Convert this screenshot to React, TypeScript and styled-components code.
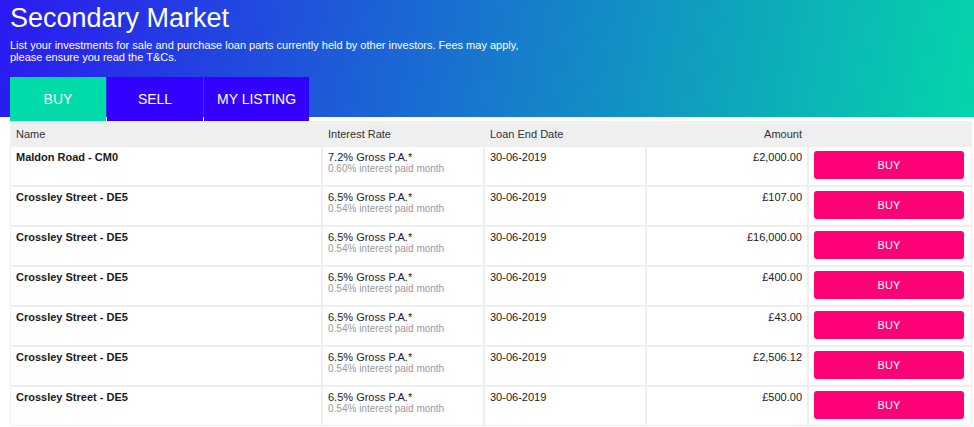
import React from "react";
import styled, { createGlobalStyle } from "styled-components";

const GlobalStyle = createGlobalStyle`
  html, body {
    margin: 0;
    padding: 0;
    background: #ffffff;
    font-family: "Liberation Sans", Arial, Helvetica, sans-serif;
  }
  * { box-sizing: border-box; }
`;

const Page = styled.div`
  width: 974px;
  overflow: hidden;
`;

const Hero = styled.header`
  background: linear-gradient(100deg, #2b1af1 0%, #04d5aa 100%);
  padding: 2px 10px 0;
  height: 117px;
  color: #ffffff;
`;

const Title = styled.h1`
  margin: 0;
  font-size: 27px;
  line-height: 32px;
  font-weight: 400;
`;

const Intro = styled.p`
  margin: 5px 0 0;
  font-size: 11px;
  line-height: 12px;
  width: 520px;
`;

const Tabs = styled.nav`
  display: flex;
  gap: 1px;
  margin-top: 14px;
  height: 44px;
`;

const Tab = styled.button<{ $active?: boolean }>`
  min-width: 96px;
  height: 44px;
  padding: 0 13px;
  border: none;
  margin: 0;
  background: ${(p) => (p.$active ? "#00dbaa" : "#3300ff")};
  color: #ffffff;
  font-family: inherit;
  font-size: 14px;
  font-weight: 400;
  cursor: pointer;
`;

const Table = styled.table`
  width: 962px;
  margin: 4px 0 0 10px;
  border-collapse: separate;
  border-spacing: 0;
  table-layout: fixed;
  font-size: 11px;
  color: #1a1a1a;
`;

const HeadCell = styled.th<{ $align?: "left" | "right" }>`
  background: #efefef;
  border: 1px solid #efefef;
  height: 25px;
  padding: 0 5px;
  font-weight: 400;
  text-align: ${(p) => p.$align ?? "left"};
  color: #333333;
  font-size: 11px;
`;

const Cell = styled.td<{ $align?: "left" | "right" }>`
  background: #ffffff;
  border: 1px solid #eeeeee;
  height: 40px;
  padding: 4px 5px 0;
  vertical-align: top;
  text-align: ${(p) => p.$align ?? "left"};
  line-height: 12px;
`;

const ButtonCell = styled.td`
  background: #ffffff;
  border: 1px solid #eeeeee;
  height: 40px;
  padding: 4px 5px 0 5px;
  vertical-align: top;
`;

const Name = styled.span`
  font-weight: 700;
`;

const Rate = styled.div`
  font-size: 11px;
  line-height: 12px;
`;

const RateNote = styled.div`
  font-size: 10px;
  line-height: 11px;
  color: #9a9a9a;
`;

const BuyButton = styled.button`
  display: block;
  width: 150px;
  height: 28px;
  border: none;
  border-radius: 3px;
  background: #ff0077;
  color: #ffffff;
  font-family: inherit;
  font-size: 11px;
  letter-spacing: 0.2px;
  cursor: pointer;
`;

type Listing = {
  name: string;
  rate: string;
  monthly: string;
  end: string;
  amount: string;
};

const listings: Listing[] = [
  { name: "Maldon Road - CM0", rate: "7.2% Gross P.A.*", monthly: "0.60% interest paid month", end: "30-06-2019", amount: "£2,000.00" },
  { name: "Crossley Street - DE5", rate: "6.5% Gross P.A.*", monthly: "0.54% interest paid month", end: "30-06-2019", amount: "£107.00" },
  { name: "Crossley Street - DE5", rate: "6.5% Gross P.A.*", monthly: "0.54% interest paid month", end: "30-06-2019", amount: "£16,000.00" },
  { name: "Crossley Street - DE5", rate: "6.5% Gross P.A.*", monthly: "0.54% interest paid month", end: "30-06-2019", amount: "£400.00" },
  { name: "Crossley Street - DE5", rate: "6.5% Gross P.A.*", monthly: "0.54% interest paid month", end: "30-06-2019", amount: "£43.00" },
  { name: "Crossley Street - DE5", rate: "6.5% Gross P.A.*", monthly: "0.54% interest paid month", end: "30-06-2019", amount: "£2,506.12" },
  { name: "Crossley Street - DE5", rate: "6.5% Gross P.A.*", monthly: "0.54% interest paid month", end: "30-06-2019", amount: "£500.00" },
];

export default function App() {
  return (
    <Page>
      <GlobalStyle />
      <Hero>
        <Title>Secondary Market</Title>
        <Intro>
          List your investments for sale and purchase loan parts currently held by other investors. Fees may apply,
          please ensure you read the T&amp;Cs.
        </Intro>
        <Tabs>
          <Tab $active>BUY</Tab>
          <Tab>SELL</Tab>
          <Tab>MY LISTING</Tab>
        </Tabs>
      </Hero>
      <Table>
        <colgroup>
          <col style={{ width: 312 }} />
          <col style={{ width: 162 }} />
          <col style={{ width: 162 }} />
          <col style={{ width: 162 }} />
          <col style={{ width: 164 }} />
        </colgroup>
        <thead>
          <tr>
            <HeadCell>Name</HeadCell>
            <HeadCell>Interest Rate</HeadCell>
            <HeadCell>Loan End Date</HeadCell>
            <HeadCell $align="right">Amount</HeadCell>
            <HeadCell />
          </tr>
        </thead>
        <tbody>
          {listings.map((l, i) => (
            <tr key={i}>
              <Cell>
                <Name>{l.name}</Name>
              </Cell>
              <Cell>
                <Rate>{l.rate}</Rate>
                <RateNote>{l.monthly}</RateNote>
              </Cell>
              <Cell>{l.end}</Cell>
              <Cell $align="right">{l.amount}</Cell>
              <ButtonCell>
                <BuyButton>BUY</BuyButton>
              </ButtonCell>
            </tr>
          ))}
        </tbody>
      </Table>
    </Page>
  );
}
